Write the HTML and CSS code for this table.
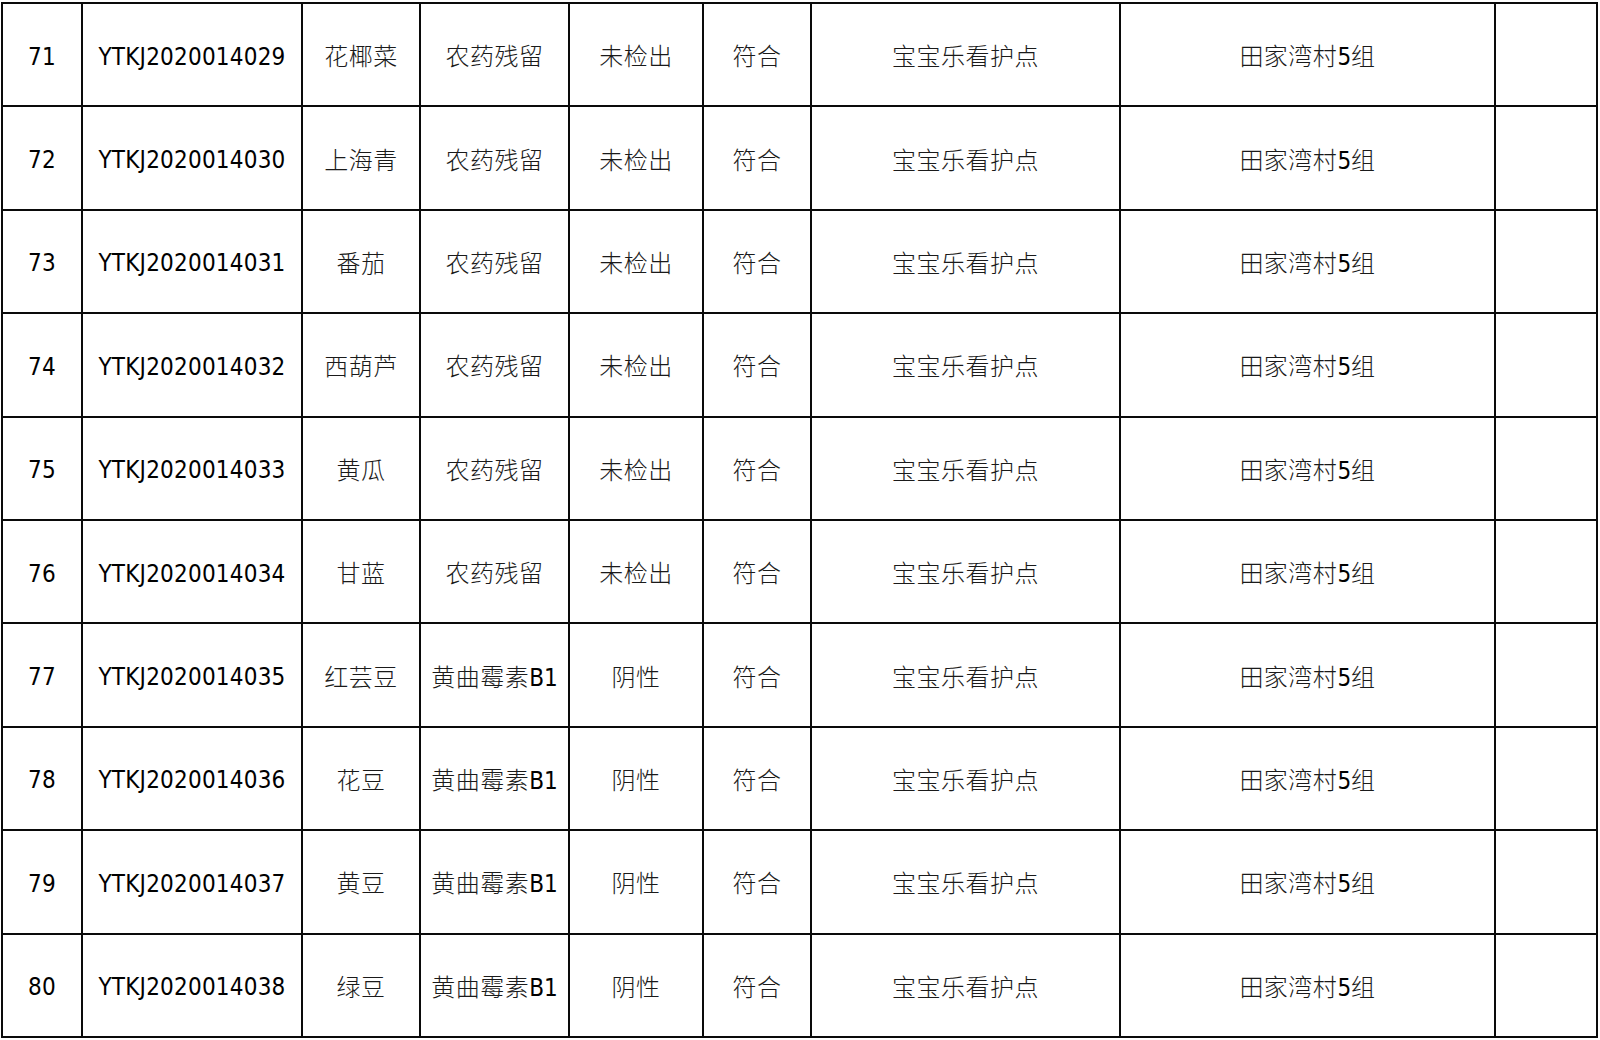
FILE: index.html
```html
<!DOCTYPE html>
<html lang="zh-CN">
<head>
<meta charset="utf-8">
<title>检测结果</title>
<link rel="stylesheet" href="styles.css">
</head>
<body>
<table class="grid">
  <colgroup>
    <col class="c-no"><col class="c-code"><col class="c-name"><col class="c-item"><col class="c-res"><col class="c-ok"><col class="c-place"><col class="c-addr"><col class="c-note">
  </colgroup>
  <tbody>
    <tr><td class="lat">71</td><td class="lat">YTKJ2020014029</td><td>花椰菜</td><td>农药残留</td><td>未检出</td><td>符合</td><td>宝宝乐看护点</td><td>田家湾村<span class="lat">5</span>组</td><td></td></tr>
    <tr><td class="lat">72</td><td class="lat">YTKJ2020014030</td><td>上海青</td><td>农药残留</td><td>未检出</td><td>符合</td><td>宝宝乐看护点</td><td>田家湾村<span class="lat">5</span>组</td><td></td></tr>
    <tr><td class="lat">73</td><td class="lat">YTKJ2020014031</td><td>番茄</td><td>农药残留</td><td>未检出</td><td>符合</td><td>宝宝乐看护点</td><td>田家湾村<span class="lat">5</span>组</td><td></td></tr>
    <tr><td class="lat">74</td><td class="lat">YTKJ2020014032</td><td>西葫芦</td><td>农药残留</td><td>未检出</td><td>符合</td><td>宝宝乐看护点</td><td>田家湾村<span class="lat">5</span>组</td><td></td></tr>
    <tr><td class="lat">75</td><td class="lat">YTKJ2020014033</td><td>黄瓜</td><td>农药残留</td><td>未检出</td><td>符合</td><td>宝宝乐看护点</td><td>田家湾村<span class="lat">5</span>组</td><td></td></tr>
    <tr><td class="lat">76</td><td class="lat">YTKJ2020014034</td><td>甘蓝</td><td>农药残留</td><td>未检出</td><td>符合</td><td>宝宝乐看护点</td><td>田家湾村<span class="lat">5</span>组</td><td></td></tr>
    <tr><td class="lat">77</td><td class="lat">YTKJ2020014035</td><td>红芸豆</td><td>黄曲霉素<span class="lat">B1</span></td><td>阴性</td><td>符合</td><td>宝宝乐看护点</td><td>田家湾村<span class="lat">5</span>组</td><td></td></tr>
    <tr><td class="lat">78</td><td class="lat">YTKJ2020014036</td><td>花豆</td><td>黄曲霉素<span class="lat">B1</span></td><td>阴性</td><td>符合</td><td>宝宝乐看护点</td><td>田家湾村<span class="lat">5</span>组</td><td></td></tr>
    <tr><td class="lat">79</td><td class="lat">YTKJ2020014037</td><td>黄豆</td><td>黄曲霉素<span class="lat">B1</span></td><td>阴性</td><td>符合</td><td>宝宝乐看护点</td><td>田家湾村<span class="lat">5</span>组</td><td></td></tr>
    <tr><td class="lat">80</td><td class="lat">YTKJ2020014038</td><td>绿豆</td><td>黄曲霉素<span class="lat">B1</span></td><td>阴性</td><td>符合</td><td>宝宝乐看护点</td><td>田家湾村<span class="lat">5</span>组</td><td></td></tr>
  </tbody>
</table>
</body>
</html>
```

FILE: styles.css
```css
html, body {
  margin: 0;
  padding: 0;
  background: #ffffff;
}

body {
  padding: 2px 0 0 1px;
}

.grid {
  border-collapse: collapse;
  table-layout: fixed;
  width: 1597px;
  font-family: "Noto Sans CJK SC", sans-serif;
  font-size: 24px;
  color: #1a1a1a;
}

.c-no { width: 80px; }
.c-code { width: 220px; }
.c-name { width: 118px; }
.c-item { width: 149px; }
.c-res { width: 134px; }
.c-ok { width: 108px; }
.c-place { width: 309px; }
.c-addr { width: 375px; }
.c-note { width: 102px; }

.grid tr {
  height: 103.4px;
}

.grid td {
  border: 2px solid #0a0a0a;
  padding: 0;
  text-align: center;
  vertical-align: middle;
  white-space: nowrap;
  font-weight: 300;
  letter-spacing: 0.5px;
}

.lat {
  font-family: "DejaVu Sans Condensed", "DejaVu Sans", sans-serif;
  font-weight: 400;
  letter-spacing: 0;
  color: #000;
}

.grid td.lat {
  font-family: "DejaVu Sans Condensed", "DejaVu Sans", sans-serif;
  font-weight: 400;
  letter-spacing: 0.2px;
  color: #000;
  padding-top: 4px;
}
```
